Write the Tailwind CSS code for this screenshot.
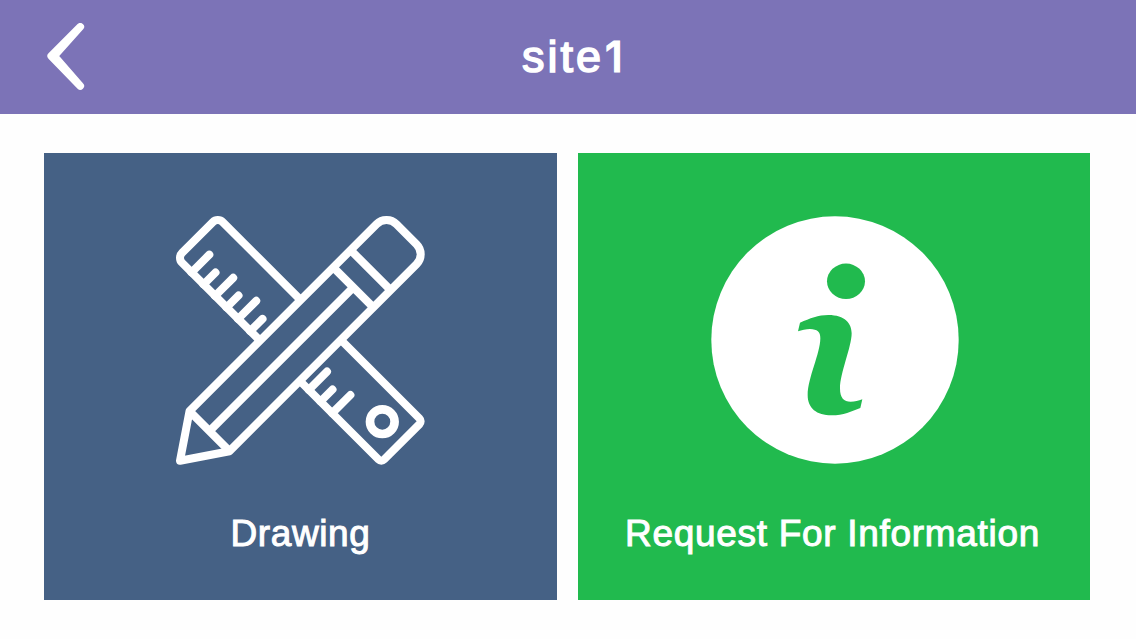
<!DOCTYPE html>
<html lang="en">
  <head>
    <meta charset="utf-8" />
    <meta name="viewport" content="width=device-width, initial-scale=1" />
    <title>site1</title>
    <script src="https://cdn.jsdelivr.net/npm/@tailwindcss/browser@4"></script>
  </head>
  <body>
    <div
      class="flex h-screen flex-col overflow-hidden bg-[#fefefe] text-white"
      style="font-family: 'Liberation Sans', Arial, sans-serif"
    >
      <header class="grid h-[114px] shrink-0 grid-cols-[1fr_auto_1fr] items-center bg-[#7c73b7] px-[47px]">
        <button class="cursor-pointer justify-self-start" aria-label="Back">
          <svg class="block h-[68px] w-[38px]" viewBox="0 0 38 68" fill="currentColor" stroke="currentColor" stroke-width="7.6" stroke-linejoin="round">
            <path d="M33.3 3.8 4.2 33 33.3 63 7.2 33Z" />
          </svg>
        </button>
        <h1 class="pb-[2px] pl-[12px] text-[45px] leading-none tracking-[3px] [-webkit-text-stroke:1.6px_white]">site<span class="ml-px font-[Inter] text-[43px] font-medium [-webkit-text-stroke:1.2px_white]">1</span></h1>
      </header>

      <main class="grid grid-cols-[513px_512px] gap-[21px] pt-[39px] pl-11">
        <a href="#" class="flex h-[447px] flex-col items-center bg-[#456185] pt-[63px]">
          <svg class="size-[249px] shrink-0" viewBox="0 0 249 249" fill="none" stroke="currentColor" stroke-width="8" stroke-linejoin="round">
            <!-- ruler -->
            <path d="M124 83.3 46.75 6.05a7 7 0 0 0-9.9 0L6.05 36.85a7 7 0 0 0 0 9.9L82 122.7" />
            <path d="M167 126 243.5 202.5a4 4 0 0 1 0 5.6L208.1 243.5a4 4 0 0 1-5.6 0L126 167" />
            <g stroke-linecap="round">
              <path d="M15.5 56.5 33.3 38.7M27.5 68.5 39.5 56.5M39 80 57.2 61.8M50.5 91.5 62.5 79.5M62 103 80.2 84.8M74.2 115.2 86.5 102.9" />
              <path d="M132.8 173.8 151 155.6M144.5 185.5 156.5 173.5M156.2 197.2 174.4 179" />
            </g>
            <circle cx="206.3" cy="205.7" r="12.3" stroke-width="8.7" />
            <!-- pencil -->
            <path d="M13.5 195.2 200.6 8.1a14 14 0 0 1 19.8 0L240.6 28.3a14 14 0 0 1 0 19.8L53.5 235.2 4 244.7Z" />
            <path d="M13.5 195.2 53.5 235.2M33.5 215.2 177.3 71.4M157.3 51.4 197.3 91.4M174.6 34.1 214.6 74.1" />
          </svg>
          <span class="mt-[49px] text-[37px] leading-[40px] tracking-[0.6px] [-webkit-text-stroke:1px_white]">Drawing</span>
        </a>

        <a href="#" class="flex h-[447px] flex-col items-center bg-[#21ba4e] pt-[63px]">
          <svg class="ml-px size-[248px] shrink-0" viewBox="0 0 248 248">
            <circle cx="124" cy="124" r="123.7" fill="#fff" />
            <g fill="#21ba4e">
              <ellipse cx="135" cy="65.3" rx="19" ry="17.7" />
              <path transform="translate(69 34) scale(.3333)" d="M60 218C90 205 115 195 145 195C195 195 215 220 215 250C215 290 180 370 180 415C180 445 192 455 212 455C225 455 235 452 247 448L241 474C215 484 190 496 155 496C110 496 83 475 83 435C83 385 121 310 121 265C121 245 112 238 90 237C78 237 65 240 54 244Z" />
            </g>
          </svg>
          <span class="mt-[50px] mr-[3px] text-[37px] leading-[40px] tracking-[0.7px] whitespace-nowrap [-webkit-text-stroke:1px_white]">Request For Information</span>
        </a>
      </main>
    </div>
  </body>
</html>
